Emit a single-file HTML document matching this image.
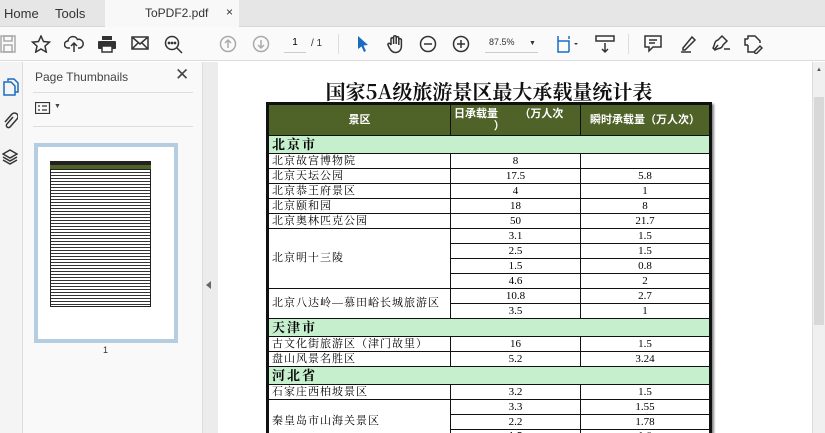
<!DOCTYPE html>
<html><head><meta charset="utf-8"><style>
*{margin:0;padding:0;box-sizing:border-box}
html,body{width:825px;height:433px;overflow:hidden}
body{background:#fff;font-family:"Liberation Sans","Noto Sans CJK SC",sans-serif;position:relative}
.abs{position:absolute}
.tabbar{left:0;top:0;width:825px;height:27px;background:#e6e6e6;border-bottom:1px solid #d8d8d8}
.tabbar span{position:absolute;top:6px;font-size:13px;color:#333}
.tab{left:105px;top:0;width:134px;height:28px;background:#f8f8f8}
.toolbar{left:0;top:27px;width:825px;height:34px;background:#fafafa;border-bottom:1px solid #dcdcdc}
svg.i{position:absolute;fill:none;stroke:#333;stroke-width:1.5}
.strip{left:0;top:62px;width:23px;height:371px;background:#f4f4f4;border-right:1px solid #ddd}
.panel{left:23px;top:62px;width:180px;height:371px;background:#f9f9f9;border-right:1px solid #ddd}
.coll{left:203px;top:62px;width:15px;height:371px;background:#ececec}
.scroll{left:812px;top:62px;width:13px;height:371px;background:#f0f0f0;border-left:1px solid #ddd}
table{position:absolute;left:266px;top:102px;width:446px;border-collapse:collapse;border:3px solid #111;font-family:"Liberation Serif","Noto Serif CJK SC",serif;font-size:11px;box-shadow:2px 2px 2px #888}
td{border:1px solid #111;height:15px;padding:0 3px;line-height:13px;text-align:center}
td.l{text-align:left;letter-spacing:1px}
tr.h td{background:#4f6228;color:#fff;font-weight:bold;height:32px;font-family:"Liberation Sans","Noto Sans CJK SC",sans-serif;font-size:11px}
tr.g td{background:#c6efce;font-weight:bold;font-size:13px;text-align:left;height:18px;letter-spacing:2px}
</style></head><body>
<div class="abs tabbar"><span style="left:4px">Home</span><span style="left:55px">Tools</span></div>
<div class="abs tab"><span style="position:absolute;left:40px;top:6px;font-size:12px;color:#333">ToPDF2.pdf</span><span style="position:absolute;left:121px;top:5px;font-size:12px;color:#333">×</span></div>
<div class="abs toolbar"></div>
<svg class="i" style="left:0;top:35px;stroke:#aaa" width="16" height="18"><rect x="1" y="1" width="14" height="16"/><rect x="4" y="1" width="8" height="5"/><rect x="4" y="10" width="8" height="7"/></svg>
<svg class="i" style="left:31px;top:35px" width="20" height="18"><path d="M10 1l2.5 5.5 6 .6-4.5 4 1.3 6-5.3-3.1-5.3 3.1 1.3-6-4.5-4 6-.6z"/></svg>
<svg class="i" style="left:64px;top:35px" width="20" height="18"><path d="M6 13H4a3.5 3.5 0 0 1 0-7 5 5 0 0 1 9.5-1.5A4 4 0 0 1 16 13h-2M10 17V8M7 11l3-3 3 3"/></svg>
<svg class="i" style="left:97px;top:35px;fill:#333;stroke:none" width="20" height="18"><rect x="5" y="1" width="10" height="4"/><rect x="1" y="6" width="18" height="8" rx="1"/><rect x="5" y="11" width="10" height="6" fill="#fff" stroke="#333"/></svg>
<svg class="i" style="left:131px;top:36px" width="18" height="14"><rect x="1" y="1" width="16" height="12"/><path d="M1 1l8 7 8-7M1 13l6-6M17 13l-6-6"/></svg>
<svg class="i" style="left:164px;top:35px" width="20" height="20"><circle cx="8" cy="8" r="6.5"/><path d="M13 13l5 5"/><circle cx="5" cy="8" r=".6"/><circle cx="8" cy="8" r=".6"/><circle cx="11" cy="8" r=".6"/></svg>
<svg class="i" style="left:219px;top:35px;stroke:#aaa" width="18" height="18"><circle cx="9" cy="9" r="7.5"/><path d="M9 13V5M6 8l3-3 3 3"/></svg>
<svg class="i" style="left:252px;top:35px;stroke:#aaa" width="18" height="18"><circle cx="9" cy="9" r="7.5"/><path d="M9 5v8M6 10l3 3 3-3"/></svg>
<div class="abs" style="left:284px;top:37px;width:22px;height:16px;border-bottom:1px solid #ccc;font-size:10px;text-align:center">1</div>
<div class="abs" style="left:311px;top:38px;font-size:10px;color:#333">/ 1</div>
<div class="abs" style="left:338px;top:34px;width:1px;height:20px;background:#ddd"></div>
<svg class="i" style="left:356px;top:35px;fill:#1a6cc2;stroke:none" width="14" height="18"><path d="M2 1l10 9-4.5.5 2.5 5.5-2 1-2.5-5.5L2 14z"/></svg>
<svg class="i" style="left:386px;top:34px" width="20" height="20"><path d="M5 11V5a1.3 1.3 0 0 1 2.6 0v5V3a1.3 1.3 0 0 1 2.6 0v7V4a1.3 1.3 0 0 1 2.6 0v7V6a1.3 1.3 0 0 1 2.6 0v6c0 4-2.5 6.5-6 6.5-3 0-4.5-2-6-4.5L2 11a1.3 1.3 0 0 1 2.2-1.3L5 11"/></svg>
<svg class="i" style="left:419px;top:35px" width="18" height="18"><circle cx="9" cy="9" r="7.5"/><path d="M5 9h8"/></svg>
<svg class="i" style="left:452px;top:35px" width="18" height="18"><circle cx="9" cy="9" r="7.5"/><path d="M5 9h8M9 5v8"/></svg>
<div class="abs" style="left:485px;top:37px;width:53px;height:16px;border-bottom:1px solid #ccc;font-size:9px;color:#333;padding-left:4px">87.5% <span style="margin-left:12px;font-size:7px">▼</span></div>
<svg class="i" style="left:555px;top:34px;stroke:#1a6cc2" width="26" height="20"><path d="M3 2v16h11M3 7h11v11M14 2v3"/><path d="M19 9l2 2 2-2" fill="#333" stroke="none"/></svg>
<svg class="i" style="left:595px;top:34px" width="20" height="20"><rect x="1" y="2" width="18" height="5"/><path d="M10 9v9M7 15l3 3 3-3"/></svg>
<div class="abs" style="left:628px;top:34px;width:1px;height:20px;background:#ddd"></div>
<svg class="i" style="left:644px;top:35px" width="18" height="18"><path d="M1 1h16v11H9l-4 4v-4H1z"/><path d="M5 5h8M5 8h6"/></svg>
<svg class="i" style="left:678px;top:34px" width="20" height="20"><path d="M5 14l9-11 3 3-10 10H5zM3 18h10" /></svg>
<svg class="i" style="left:710px;top:34px" width="22" height="20"><path d="M3 14c2-3 1-7 5-8l4-4 5 5-4 4c-1 4-5 3-8 5zM8 11l-4 5M14 15h6"/></svg>
<svg class="i" style="left:743px;top:34px" width="20" height="20"><path d="M5 5V2h7l5 5v2M5 5H2v6h3M5 11v7h6M11 18l6-6 2 2-6 6z"/></svg>
<div class="abs strip"></div>
<svg class="i" style="left:3px;top:78px;stroke:#1a6cc2" width="16" height="18"><path d="M5 3V1h6l4 4v9h-3"/><path d="M1 4h7l4 4v9H1z"/></svg>
<svg class="i" style="left:2px;top:112px" width="16" height="18"><path d="M11 5l-6 7a2 2 0 0 0 3 3l7-8a3.5 3.5 0 0 0-5-5l-7 8"/></svg>
<svg class="i" style="left:2px;top:148px" width="16" height="18"><path d="M8 2l7 4-7 4-7-4zM1 9l7 4 7-4M1 12l7 4 7-4"/></svg>
<div class="abs panel">
<div style="position:absolute;left:12px;top:8px;font-size:12px;color:#444">Page Thumbnails</div>
<div style="position:absolute;left:152px;top:3px;font-size:17px;color:#444">✕</div>
<div style="position:absolute;left:10px;top:30px;width:160px;height:1px;background:#ddd"></div>
<svg class="i" style="left:12px;top:40px;stroke-width:1.2" width="16" height="12"><rect x=".5" y=".5" width="14" height="11"/><path d="M3 4h2M7 4h5M3 8h2M7 8h5"/></svg>
<div style="position:absolute;left:31px;top:41px;font-size:7px;color:#444">▼</div>
<div style="position:absolute;left:10px;top:64px;width:160px;height:1px;background:#ddd"></div>
<div style="position:absolute;left:11px;top:81px;width:144px;height:200px;background:#b5cde0;padding:4px"><div style="width:136px;height:192px;background:#fff;position:relative">
<div style="position:absolute;left:12px;top:14px;width:101px;height:4px;background:#222"></div>
<div style="position:absolute;left:12px;top:18px;width:101px;height:4px;background:#4f6228"></div>
<div style="position:absolute;left:12px;top:22px;width:101px;height:138px;border:1px solid #222;background:repeating-linear-gradient(#fff 0,#fff 2px,#333 2px,#333 3px)"></div>
</div></div>
<div style="position:absolute;left:80px;top:283px;font-size:9px;color:#333">1</div>
</div>
<div class="abs coll"></div>
<div class="abs" style="left:206px;top:281px;width:0;height:0;border-top:4px solid transparent;border-bottom:4px solid transparent;border-right:5px solid #666"></div>
<div class="abs scroll"><div style="position:absolute;left:1px;top:35px;width:10px;height:228px;background:#d8d8d8"></div><div style="position:absolute;left:3px;top:5px;font-size:6px;color:#555">▲</div></div>
<div class="abs" style="left:266px;top:79px;width:446px;text-align:center;font-family:'Noto Serif CJK SC','Liberation Serif',serif;font-weight:bold;font-size:20px;line-height:24px;color:#111">国家5A级旅游景区最大承载量统计表</div>
<table>
<colgroup><col style="width:183px"><col style="width:130px"><col></colgroup>
<tr class="h"><td>景区</td><td style="text-align:left;line-height:12px">日承载量 &nbsp; &nbsp; &nbsp; （万人次<br>&nbsp; &nbsp; &nbsp; &nbsp; &nbsp; &nbsp; &nbsp;）</td><td>瞬时承载量（万人次）</td></tr>
<tr class="g"><td colspan="3">北京市</td></tr>
<tr><td class="l">北京故宫博物院</td><td>8</td><td></td></tr>
<tr><td class="l">北京天坛公园</td><td>17.5</td><td>5.8</td></tr>
<tr><td class="l">北京恭王府景区</td><td>4</td><td>1</td></tr>
<tr><td class="l">北京颐和园</td><td>18</td><td>8</td></tr>
<tr><td class="l">北京奥林匹克公园</td><td>50</td><td>21.7</td></tr>
<tr><td class="l" rowspan="4">北京明十三陵</td><td>3.1</td><td>1.5</td></tr>
<tr><td>2.5</td><td>1.5</td></tr>
<tr><td>1.5</td><td>0.8</td></tr>
<tr><td>4.6</td><td>2</td></tr>
<tr><td class="l" rowspan="2">北京八达岭—慕田峪长城旅游区</td><td>10.8</td><td>2.7</td></tr>
<tr><td>3.5</td><td>1</td></tr>
<tr class="g"><td colspan="3">天津市</td></tr>
<tr><td class="l">古文化街旅游区（津门故里）</td><td>16</td><td>1.5</td></tr>
<tr><td class="l">盘山风景名胜区</td><td>5.2</td><td>3.24</td></tr>
<tr class="g"><td colspan="3">河北省</td></tr>
<tr><td class="l">石家庄西柏坡景区</td><td>3.2</td><td>1.5</td></tr>
<tr><td class="l" rowspan="3">秦皇岛市山海关景区</td><td>3.3</td><td>1.55</td></tr>
<tr><td>2.2</td><td>1.78</td></tr>
<tr><td>1.5</td><td>1.0</td></tr>
</table>
</body></html>
